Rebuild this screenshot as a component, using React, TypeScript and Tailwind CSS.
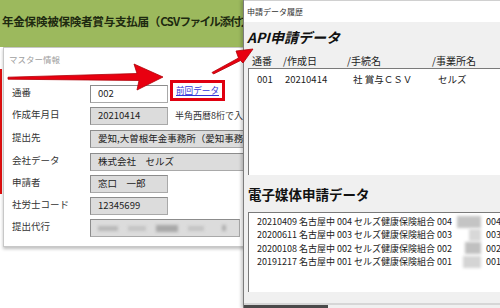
import React from "react";

const jp = { fontFamily: '"Noto Sans CJK JP", "Noto Sans", sans-serif' };

function Field({ label, value, w, white, tall, children }: { label: string; value?: string; w?: string; white?: boolean; tall?: boolean; children?: React.ReactNode }) {
  return (
    <div className={`flex items-center ${tall ? "h-[24px]" : "h-[22px]"}`}>
      <div className="w-[78px] shrink-0 text-[9.5px] text-[#333] leading-none -mt-[2px]">{label}</div>
      <div
        className={`${w ?? "w-[78px]"} h-[18px] shrink-0 flex items-center pl-[7px] text-[9.5px] text-[#222] leading-none whitespace-nowrap overflow-hidden border border-[#a9a9a9] border-t-[#8c8c8c] border-l-[#8c8c8c] ${white ? "bg-white" : "bg-[#dcdcdc]"}`}
      >
        {value}
        {children}
      </div>
    </div>
  );
}

const rows2 = [
  { t: "20210409 名古屋中 004 セルズ健康保険組合 004", n: "004", bw: "w-[24px]", bc: "bg-[#c4c4c4]" },
  { t: "20200611 名古屋中 003 セルズ健康保険組合 003", n: "003", bw: "w-[12px]", bc: "bg-[#d8d8d8]" },
  { t: "20200108 名古屋中 002 セルズ健康保険組合 002", n: "002", bw: "w-[16px]", bc: "bg-[#c0c0c0]" },
  { t: "20191217 名古屋中 001 セルズ健康保険組合 001", n: "001", bw: "w-[18px]", bc: "bg-[#d4d4d4]" },
];

export default function App() {
  return (
    <div className="relative w-[500px] h-[308px] overflow-hidden bg-white flex" style={jp}>
      {/* Left window */}
      <div className="w-[243px] shrink-0 flex flex-col overflow-hidden">
        <div className="h-[47px] shrink-0 bg-[#9cb95d] flex items-center pl-[2px] pb-[3px]">
          <span className="whitespace-nowrap text-[11.6px] font-bold text-[#1e2a10] tracking-[-0.3px]">
            年金保険被保険者賞与支払届（<span className="tracking-[-0.8px]">CSV</span>
            <span className="tracking-[-1.6px]">ファイル</span>
            <span className="tracking-[-0.9px]">添付方式</span>）
          </span>
        </div>
        <div className="flex-1 flex bg-white">
          <div className="w-[3px] shrink-0">
            <div className="mt-[22px] h-[125px] w-[2px] bg-[#e01010]" />
          </div>
          <div className="w-[270px] shrink-0 h-[200px] border border-[#c8c8c8] shadow-[0_2px_3px_rgba(0,0,0,0.25)] bg-white pl-[8px] pt-[5px]">
            <div className="text-[8.5px] text-[#a0a0a0] leading-[12px] -ml-[3px]">マスター情報</div>
            <div className="mt-[18px] flex flex-col">
              <div className="flex items-center h-[22px]">
                <div className="w-[78px] shrink-0 text-[9.5px] text-[#333] leading-none -mt-[2px]">通番</div>
                <div className="w-[78px] h-[18px] shrink-0 flex items-center pl-[7px] text-[9.5px] text-[#222] leading-none border border-[#a9a9a9] border-t-[#8c8c8c] border-l-[#8c8c8c] bg-white">
                  002
                </div>
                <div className="ml-[2px] -mt-[8px] h-[21px] px-[3px] border-[3px] border-[#e00010] bg-white flex items-center">
                  <span className="text-[8.6px] text-[#3535d8] underline leading-none">前回データ</span>
                </div>
              </div>
              <div className="flex items-center h-[22px]">
                <Field label="作成年月日" value="20210414" />
                <span className="ml-[7px] text-[9px] text-[#333] whitespace-nowrap leading-none -mt-[2px]">半角西暦8桁で入力</span>
              </div>
              <Field label="提出先" value="愛知,大曽根年金事務所（愛知事務センター）" w="w-[170px]" tall />
              <Field label="会社データ" value="株式会社　セルズ" w="w-[170px]" />
              <Field label="申請者" value="窓口　一郎" />
              <Field label="社労士コード" value="12345699" />
              <Field label="提出代行" w="w-[150px]">
                <div className="flex items-center gap-[10px] blur-[1.5px]">
                  <div className="w-[20px] h-[5px] bg-[#b8b8b8]" />
                  <div className="w-[18px] h-[5px] bg-[#c4c4c4]" />
                  <div className="w-[22px] h-[7px] bg-[#a8a8a8]" />
                  <div className="w-[16px] h-[5px] bg-[#c4c4c4]" />
                  <div className="ml-[8px] w-[4px] h-[6px] bg-[#b0b0b0]" />
                </div>
              </Field>
            </div>
          </div>
        </div>
      </div>

      {/* Right window */}
      <div className="flex-1 flex flex-col bg-[#f0f0f0] border-l border-[#7c7c7c] shadow-[-2px_0_3px_rgba(0,0,0,0.2)] z-10">
        <div className="h-[22px] shrink-0 bg-white border-t border-[#d0d0d0] flex items-center pl-[3px]">
          <span className="text-[8px] text-[#333] leading-none">申請データ履歴</span>
        </div>
        <div className="mt-[7px] pl-[3px] h-[16px] flex items-center text-[14px] font-bold text-[#111] leading-none whitespace-nowrap">
          <span className="italic">API</span>
          <span className="italic">申請データ</span>
        </div>
        <div className="mt-[10px] h-[13px] relative text-[10px] text-[#222] leading-none whitespace-nowrap">
          <span className="absolute left-[8px] top-[1px]">通番</span>
          <span className="absolute left-[39px] top-[1px]">/作成日</span>
          <span className="absolute left-[103px] top-[1px]">/手続名</span>
          <span className="absolute left-[188px] top-[1px]">/事業所名</span>
        </div>
        <div className="ml-[4px] h-[107px] shrink-0 bg-white border-t border-l border-[#7a7a7a] relative text-[9.5px] text-[#222] leading-none whitespace-nowrap">
          <span className="absolute left-[8px] top-[6px]">001</span>
          <span className="absolute left-[36px] top-[6px]">20210414</span>
          <span className="absolute left-[104px] top-[6px]">社 賞与ＣＳＶ</span>
          <span className="absolute left-[189px] top-[6px]">セルズ</span>
        </div>
        <div className="mt-[12px] pl-[4px] h-[16px] flex items-center text-[13.5px] font-bold text-[#111] leading-none whitespace-nowrap">
          電子媒体申請データ
        </div>
        <div className="mt-[9px] ml-[4px] h-[80px] shrink-0 bg-white border-t border-l border-[#7a7a7a] pt-[2px] pl-[8px] text-[9px] text-[#222] leading-none whitespace-nowrap overflow-hidden">
          {rows2.map((r) => (
            <div key={r.n} className="h-[13.3px] flex items-center">
              <span className="w-[197px] shrink-0 overflow-hidden">{r.t}</span>
              <span className="w-[27px] shrink-0 flex justify-end">
                <span className={`${r.bw} h-[12px] ${r.bc} blur-[1.5px]`} />
              </span>
              <span className="ml-[5px]">{r.n}</span>
            </div>
          ))}
        </div>
        <div className="flex-1" />
        <div className="h-[2px] bg-[#d6d6d6]" />
        <div className="h-[3px] w-[84px] bg-[#4a4a4a]" />
      </div>

      {/* Arrows */}
      <svg className="absolute inset-0 z-20 pointer-events-none" width="500" height="308" viewBox="0 0 500 308">
        <polygon
          points="8,77.2 137,73.5 134,64 163,77 137,90 139,80.5 8,79.2"
          fill="#e80010"
          stroke="#b00008"
          strokeWidth="0.8"
          strokeLinejoin="round"
        />
        <polygon
          points="212,72.5 238.5,58 236,51 253,49 243,63 240.5,60.5 213.5,74"
          fill="#e80010"
          stroke="#b00008"
          strokeWidth="0.8"
          strokeLinejoin="round"
        />
      </svg>
    </div>
  );
}
